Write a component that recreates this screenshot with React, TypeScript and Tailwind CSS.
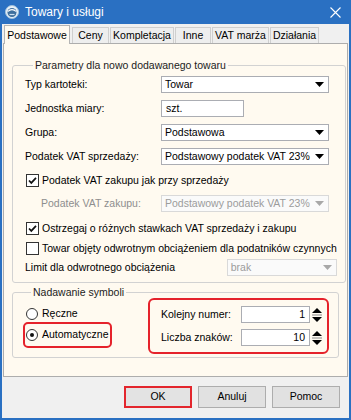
import React from "react";

const F = "font-['Liberation_Sans',Arial,sans-serif]";

function Arrow({ disabled }: { disabled?: boolean }) {
	return (
		<svg width="9" height="5" viewBox="0 0 9 5" className="shrink-0">
			<path d="M0 0h9L4.5 5z" fill={disabled ? "#a8a8a8" : "#000"} />
		</svg>
	);
}

function Select({ value, disabled, className }: { value: string; disabled?: boolean; className: string }) {
	return (
		<div
			className={`flex h-[17px] items-center justify-between border pl-[3px] pr-[4px] ${
				disabled ? "border-[#d9d9d9] bg-[#fafafa] text-[#9c9c9c]" : "border-[#abadb3] bg-white text-black"
			} ${className}`}
		>
			<span>{value}</span>
			<Arrow disabled={disabled} />
		</div>
	);
}

function Check({ checked }: { checked?: boolean }) {
	return (
		<svg width="13" height="13" viewBox="0 0 13 13" className="shrink-0">
			<rect x="0.5" y="0.5" width="12" height="12" fill="#fff" stroke="#333" />
			{checked && <path d="M3 6.5l2.3 2.4L10 3.8" fill="none" stroke="#111" strokeWidth="1.7" />}
		</svg>
	);
}

function Radio({ checked }: { checked?: boolean }) {
	return (
		<svg width="12" height="12" viewBox="0 0 12 12" className="shrink-0">
			<circle cx="6" cy="6" r="5.5" fill="#fff" stroke="#333" />
			{checked && <circle cx="6" cy="6" r="2" fill="#111" />}
		</svg>
	);
}

function Spin({ value }: { value: string }) {
	return (
		<div className="flex h-[17px]">
			<div className="flex w-[69px] items-center justify-end border border-[#abadb3] bg-white pr-[4px]">{value}</div>
			<div className="flex w-[13px] flex-col items-center justify-center">
				<svg width="10" height="16" viewBox="0 0 10 16">
					<path d="M0 6L5 1l5 5z" fill="#000" />
					<path d="M0 8h10" stroke="#888" />
					<path d="M0 10h10l-5 5z" fill="#000" />
				</svg>
			</div>
		</div>
	);
}

function Tab({ label, className }: { label: string; className: string }) {
	return (
		<div
			className={`flex h-[16px] items-center justify-center border border-b-0 border-[#cfcfcf] bg-[#eeeeee] ${className}`}
		>
			{label}
		</div>
	);
}

export default function App() {
	return (
		<div className={`flex h-[420px] w-[351px] flex-col whitespace-nowrap bg-[#2a70c2] text-[10.5px] text-black ${F}`}>
			{/* title bar */}
			<div className="flex h-[24px] shrink-0 items-center justify-between pl-[5px] pr-[10px] text-white">
				<div className="flex items-center gap-[6px]">
					<svg width="14" height="14" viewBox="0 0 14 14">
						<circle cx="7" cy="7" r="6.5" fill="#e9f1f8" stroke="#9fc0dc" />
						<circle cx="7" cy="7.5" r="4.5" fill="#3d6f9e" />
						<path d="M3 6.5c2-2.5 6-2.5 8 0" stroke="#fff" strokeWidth="1.2" fill="none" />
						<path d="M4.5 9.5h5" stroke="#cfe2f2" strokeWidth="1.2" />
					</svg>
					<span className="text-[12px]">Towary i usługi</span>
				</div>
				<svg width="11" height="11" viewBox="0 0 11 11">
					<path d="M0.5 0.5l10 10M10.5 0.5l-10 10" stroke="#fff" strokeWidth="1.1" />
				</svg>
			</div>

			{/* body */}
			<div className="mx-[2px] mb-[2px] flex flex-1 flex-col bg-[#f0f0f0] px-[1px]">
				{/* tabs */}
				<div className="flex h-[19px] items-end gap-[1px] pl-[1px]">
					<div className="relative z-10 -mb-px flex h-[19px] w-[66px] items-start justify-center border border-b-0 border-[#b5b5b5] bg-[#fffaf0] pt-[2px]">
						Podstawowe
					</div>
					<Tab label="Ceny" className="ml-[1px] w-[37px]" />
					<Tab label="Kompletacja" className="w-[64px]" />
					<Tab label="Inne" className="w-[36px]" />
					<Tab label="VAT marża" className="w-[57px]" />
					<Tab label="Działania" className="w-[49px]" />
				</div>

				{/* panel */}
				<div className="flex h-[334px] flex-col border border-[#adadad] bg-[#fffaf0] px-[8px] pt-[14px]">
					<fieldset className="rounded-[3px] border border-[#d2d2d2] pb-[5px] pl-[12px] pr-[8px] pt-[1px]">
						<legend className="ml-[8px] px-[2px] text-[#222]">Parametry dla nowo dodawanego towaru</legend>
						<div className="flex h-[20px] items-center">
							<span className="w-[136px]">Typ kartoteki:</span>
							<Select value="Towar" className="w-[168px]" />
						</div>
						<div className="mt-[4px] flex h-[20px] items-center">
							<span className="w-[136px]">Jednostka miary:</span>
							<div className="flex h-[17px] w-[83px] items-center border border-[#abadb3] bg-white pl-[4px]">szt.</div>
						</div>
						<div className="mt-[4px] flex h-[20px] items-center">
							<span className="w-[136px]">Grupa:</span>
							<Select value="Podstawowa" className="w-[168px]" />
						</div>
						<div className="mt-[4px] flex h-[20px] items-center">
							<span className="w-[136px]">Podatek VAT sprzedaży:</span>
							<Select value="Podstawowy podatek VAT 23%" className="w-[168px]" />
						</div>
						<div className="mt-[4px] flex h-[20px] items-center gap-[3px] pl-px">
							<Check checked />
							<span>Podatek VAT zakupu jak przy sprzedaży</span>
						</div>
						<div className="mt-[3px] flex h-[20px] items-center">
							<span className="w-[136px] pl-[16px] text-[#8e8e8e]">Podatek VAT zakupu:</span>
							<Select value="Podstawowy podatek VAT 23%" disabled className="w-[168px]" />
						</div>
						<div className="mt-[5px] flex h-[20px] items-center gap-[3px] pl-px">
							<Check checked />
							<span>Ostrzegaj o różnych stawkach VAT sprzedaży i zakupu</span>
						</div>
						<div className="mt-[1px] flex h-[18px] items-center gap-[3px] pl-px">
							<Check />
							<span>Towar objęty odwrotnym obciążeniem dla podatników czynnych</span>
						</div>
						<div className="mt-[1px] flex h-[18px] items-center justify-between">
							<span>Limit dla odwrotnego obciążenia</span>
							<Select value="brak" disabled className="w-[110px]" />
						</div>
					</fieldset>

					<fieldset className="mt-[2px] flex items-start justify-between rounded-[3px] border border-[#d2d2d2] pb-[3px] pl-[10px] pr-[9px]">
						<legend className="ml-[8px] px-[2px] text-[#222]">Nadawanie symboli</legend>
						<div className="-mt-[3px] flex flex-col pt-[7px]">
							<div className="flex h-[18px] items-center gap-[4px] pl-[3px]">
								<Radio />
								<span>Ręczne</span>
							</div>
							<div className="-mt-px flex h-[26px] w-[89px] items-center gap-[4px] rounded-[5px] border-2 border-[#e5222b] pl-px">
								<Radio checked />
								<span>Automatyczne</span>
							</div>
						</div>
						<div className="-mt-[3px] flex h-[56px] w-[181px] flex-col rounded-[6px] border-2 border-[#e5222b] pl-[11px] pr-[4px] pt-[6px]">
							<div className="flex h-[18px] items-center justify-between">
								<span>Kolejny numer:</span>
								<Spin value="1" />
							</div>
							<div className="mt-[5px] flex h-[18px] items-center justify-between">
								<span>Liczba znaków:</span>
								<Spin value="10" />
							</div>
						</div>
					</fieldset>
				</div>

				{/* buttons */}
				<div className="mt-[9px] flex justify-end gap-[6px] pr-[8px]">
					<div className="flex h-[22px] w-[68px] items-center justify-center border-2 border-[#e3262d] bg-[#e3e3e3]">OK</div>
					<div className="flex h-[22px] w-[68px] items-center justify-center border border-[#adadad] bg-[#e1e1e1]">Anuluj</div>
					<div className="flex h-[22px] w-[68px] items-center justify-center border border-[#adadad] bg-[#e1e1e1]">Pomoc</div>
				</div>
			</div>
		</div>
	);
}
